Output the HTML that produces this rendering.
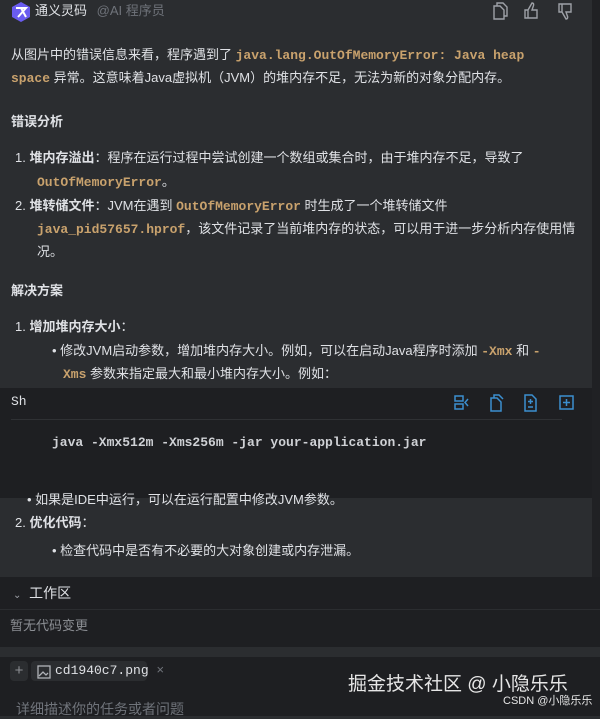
<!DOCTYPE html>
<html><head><meta charset="utf-8"><style>
*{margin:0;padding:0;box-sizing:border-box}
body{width:600px;height:716px;overflow:hidden;background:#2b2d30;font-family:"Liberation Sans","Noto Sans CJK SC",sans-serif;color:#dfe1e5;font-size:13px;position:relative}
.a{position:absolute;white-space:nowrap;line-height:20px}
code{font-family:"Liberation Mono","Noto Sans CJK SC",monospace;color:#c9a26d;font-weight:bold;font-size:13px}
.h{font-weight:bold}
.strip{position:absolute;right:0;top:0;width:8px;height:577px;background:#202124}
</style></head><body>
<div class="strip"></div>
<svg style="position:absolute;left:10px;top:1px" width="22" height="22" viewBox="0 0 22 22"><polygon points="11,1 20,6 20,16 11,21 2,16 2,6" fill="#6a5cf0"/><path d="M6 7h10L8 16M11 7l5 9" stroke="#fff" stroke-width="2" fill="none"/></svg>
<div class="a" style="left:35px;top:1px;color:#dfe1e5">通义灵码 <span style="color:#6f737a;margin-left:6px">@AI 程序员</span></div>
<svg style="position:absolute;left:492px;top:2px" width="90" height="18" viewBox="0 0 90 18" fill="none" stroke="#9ea1a7" stroke-width="1.4"><path d="M2 4h6l4 4v9H2z M5 4V1h6l4 4v9h-3"/><path d="M36 8v8h-3V8z M36 8l4-7c2 0 2 2 1 4l-1 3h5v8h-9"/><path d="M70 10V2h-3v8z M70 10l4 7c2 0 2-2 1-4l-1-3h5V2h-9"/></svg>
<div class="a" style="left:11px;top:45px">从图片中的错误信息来看，程序遇到了 <code>java.lang.OutOfMemoryError: Java heap</code></div>
<div class="a" style="left:11px;top:68px"><code>space</code> 异常。这意味着Java虚拟机（JVM）的堆内存不足，无法为新的对象分配内存。</div>
<div class="a h" style="left:11px;top:112px">错误分析</div>
<div class="a" style="left:15px;top:148px">1. <b>堆内存溢出</b>：程序在运行过程中尝试创建一个数组或集合时，由于堆内存不足，导致了</div>
<div class="a" style="left:37px;top:172px"><code>OutOfMemoryError</code>。</div>
<div class="a" style="left:15px;top:196px">2. <b>堆转储文件</b>：JVM在遇到 <code>OutOfMemoryError</code> 时生成了一个堆转储文件</div>
<div class="a" style="left:37px;top:219px"><code>java_pid57657.hprof</code>，该文件记录了当前堆内存的状态，可以用于进一步分析内存使用情</div>
<div class="a" style="left:37px;top:242px">况。</div>
<div class="a h" style="left:11px;top:281px">解决方案</div>
<div class="a" style="left:15px;top:317px">1. <b>增加堆内存大小</b>：</div>
<div class="a" style="left:52px;top:341px">• 修改JVM启动参数，增加堆内存大小。例如，可以在启动Java程序时添加 <code>-Xmx</code> 和 <code>-</code></div>
<div class="a" style="left:63px;top:364px"><code>Xms</code> 参数来指定最大和最小堆内存大小。例如：</div>
<div style="position:absolute;left:0;top:388px;width:592px;height:110px;background:#1e1f22">
 <div class="a" style="left:11px;top:4px;font-family:'Liberation Mono',monospace">Sh</div>
 <svg style="position:absolute;left:454px;top:6px" width="126" height="18" viewBox="0 0 126 18" fill="none" stroke="#3b8fd0" stroke-width="1.5"><rect x="1" y="2" width="8" height="5"/><rect x="1" y="10" width="8" height="5"/><path d="M14 5l-3 3.5 3 3.5"/><path d="M37 4h6l4 4v9h-10z M40 4V1h5l4 4"/><path d="M71 1h7l4 4v12H71z M76.5 5v5M74 7.5h5M74 13h5"/><rect x="106" y="2" width="13" height="13"/><path d="M112.5 5v7M109 8.5h7"/></svg>
 <div style="position:absolute;left:11px;right:30px;top:31px;height:1px;background:#2f3134"></div>
 <div class="a" style="left:52px;top:45px;font-family:'Liberation Mono',monospace;font-weight:bold;color:#cfd1d5">java -Xmx512m -Xms256m -jar your-application.jar</div>
</div>
<div class="a" style="left:27px;top:490px">• 如果是IDE中运行，可以在运行配置中修改JVM参数。</div>
<div class="a" style="left:15px;top:513px">2. <b>优化代码</b>：</div>
<div class="a" style="left:52px;top:541px">• 检查代码中是否有不必要的大对象创建或内存泄漏。</div>
<div style="position:absolute;left:0;top:577px;width:600px;height:70px;background:#1e1f22">
 <div class="a" style="left:13px;top:6px;font-size:14px"><span style="font-size:10px;color:#9ea1a7">⌄</span>&nbsp; 工作区</div>
 <div style="position:absolute;left:0;right:0;top:32px;height:1px;background:#2b2d30"></div>
 <div class="a" style="left:10px;top:39px;color:#8c8f94">暂无代码变更</div>
</div>
<div style="position:absolute;left:0;top:647px;width:600px;height:10px;background:#2b2d30"></div>
<div style="position:absolute;left:0;top:657px;width:600px;height:59px;background:#1e1f22">
 <div style="position:absolute;left:10px;top:4px;width:18px;height:20px;background:#2b2d30;border-radius:4px;color:#8c8f94;text-align:center;line-height:20px;font-size:15px">+</div>
 <div style="position:absolute;left:31px;top:4px;width:116px;height:20px;background:#2b2d30;border-radius:4px"></div>
 <svg style="position:absolute;left:37px;top:8px" width="14" height="14" viewBox="0 0 14 14" fill="none" stroke="#b0b3b8" stroke-width="1.3"><rect x="1" y="1" width="12" height="12"/><path d="M2 11l4-4 3 3 2-2"/></svg>
 <div class="a" style="left:55px;top:4px;font-family:'Liberation Mono',monospace;color:#dfe1e5">cd1940c7.png <span style="color:#6f737a">×</span></div>
 <div class="a" style="left:16px;top:42px;color:#6f737a;font-size:14px">详细描述你的任务或者问题</div>
 <div class="a" style="left:348px;top:16px;font-size:19px;color:#e6e6e6;line-height:24px">掘金技术社区 @ 小隐乐乐</div>
 <div class="a" style="left:503px;top:37px;font-size:11px;color:#e6e6e6;line-height:14px">CSDN @小隐乐乐</div>
</div>
</body></html>
